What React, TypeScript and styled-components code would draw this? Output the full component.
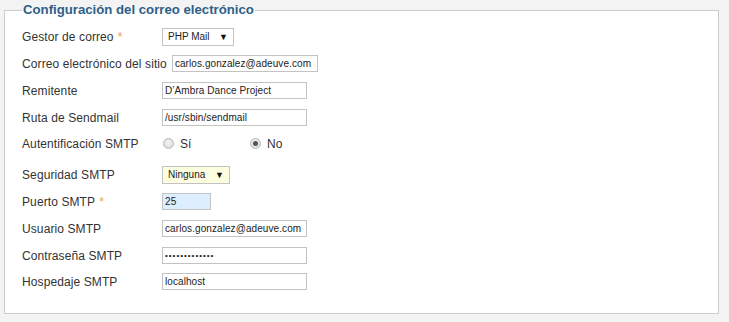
import styled, { createGlobalStyle } from "styled-components";

const GlobalStyle = createGlobalStyle`
  html, body {
    margin: 0;
    padding: 0;
    background: #f3f3f3;
    font-family: "Liberation Sans", Arial, sans-serif;
  }
`;

const Page = styled.div`
  width: 729px;
  height: 322px;
  padding: 3px 0 0 4px;
  box-sizing: border-box;
`;

const Fieldset = styled.fieldset`
  width: 715px;
  height: 311px;
  box-sizing: border-box;
  margin: 0;
  padding: 6px 0 0 17px;
  border: 1px solid #cccccc;
  background: #fff;
`;

const Legend = styled.legend`
  margin-left: 0;
  padding: 0 1px;
  color: #2f5f88;
  font-size: 13.2px;
  font-weight: bold;
  line-height: 14px;
`;

const Rows = styled.div`
  display: flex;
  flex-direction: column;
`;

const Row = styled.div<{ $shift?: number }>`
  display: flex;
  align-items: center;
  height: 27px;
  margin-top: ${(p) => p.$shift ?? 0}px;
`;

const Label = styled.label`
  min-width: 135px;
  margin-right: 5px;
  color: #333;
  font-size: 12px;
  letter-spacing: 0.1px;
  white-space: nowrap;
`;

const Star = styled.span`
  color: #e9a345;
  margin-left: 4px;
`;

const Input = styled.div<{ $w?: number; $bg?: string }>`
  width: ${(p) => p.$w ?? 145}px;
  height: 17px;
  box-sizing: border-box;
  border: 1px solid #c3c3c3;
  background: ${(p) => p.$bg ?? "#fff"};
  padding: 0 2px;
  font-size: 10px;
  letter-spacing: 0.08px;
  line-height: 15px;
  color: #222;
  white-space: nowrap;
  overflow: hidden;
`;

const Dots = styled.span`
  font-size: 8px;
  letter-spacing: 1px;
  vertical-align: 1px;
`;

const Select = styled.div<{ $w: number; $bg?: string }>`
  width: ${(p) => p.$w}px;
  height: 18px;
  box-sizing: border-box;
  border: 1px solid #c3c3c3;
  background: ${(p) => p.$bg ?? "#fff"};
  display: flex;
  align-items: center;
  justify-content: space-between;
  padding: 0 5px 0 5px;
  font-size: 10px;
  color: #222;
`;

const Arrow = styled.span`
  font-size: 9px;
  color: #111;
`;

const Radios = styled.div`
  display: flex;
  align-items: center;
`;

const RadioOption = styled.span`
  display: flex;
  align-items: center;
  width: 87px;
  font-size: 12px;
  color: #333;
`;

const RadioDot = styled.span<{ $on?: boolean }>`
  width: 11px;
  height: 11px;
  box-sizing: border-box;
  border-radius: 50%;
  border: 1px solid #b8b8b8;
  background: radial-gradient(circle at 50% 40%, #f4f4f4 0%, #d6d6d6 100%);
  margin: 0 6px 0 1px;
  position: relative;
  &::after {
    content: "";
    display: ${(p) => (p.$on ? "block" : "none")};
    position: absolute;
    left: 2px;
    top: 2px;
    width: 5px;
    height: 5px;
    border-radius: 50%;
    background: #555;
  }
`;

const App = () => {
  return (
    <Page>
      <GlobalStyle />
      <Fieldset>
        <Legend>Configuración del correo electrónico</Legend>
        <Rows>
          <Row>
            <Label>
              Gestor de correo<Star>*</Star>
            </Label>
            <Select $w={72}>
              PHP Mail <Arrow>▼</Arrow>
            </Select>
          </Row>
          <Row>
            <Label>Correo electrónico del sitio</Label>
            <Input $w={146}>carlos.gonzalez@adeuve.com</Input>
          </Row>
          <Row>
            <Label>Remitente</Label>
            <Input>D’Ambra Dance Project</Input>
          </Row>
          <Row>
            <Label>Ruta de Sendmail</Label>
            <Input>/usr/sbin/sendmail</Input>
          </Row>
          <Row $shift={-1}>
            <Label>Autentificación SMTP</Label>
            <Radios>
              <RadioOption>
                <RadioDot />
                Sí
              </RadioOption>
              <RadioOption>
                <RadioDot $on />
                No
              </RadioOption>
            </Radios>
          </Row>
          <Row $shift={4}>
            <Label>Seguridad SMTP</Label>
            <Select $w={68} $bg="#fdfde0">
              Ninguna <Arrow>▼</Arrow>
            </Select>
          </Row>
          <Row>
            <Label>
              Puerto SMTP<Star>*</Star>
            </Label>
            <Input $w={49} $bg="#ddeeff">
              25
            </Input>
          </Row>
          <Row>
            <Label>Usuario SMTP</Label>
            <Input>carlos.gonzalez@adeuve.com</Input>
          </Row>
          <Row>
            <Label>Contraseña SMTP</Label>
            <Input>
              <Dots>•••••••••••••</Dots>
            </Input>
          </Row>
          <Row $shift={-1}>
            <Label>Hospedaje SMTP</Label>
            <Input>localhost</Input>
          </Row>
        </Rows>
      </Fieldset>
    </Page>
  );
};

export default App;
